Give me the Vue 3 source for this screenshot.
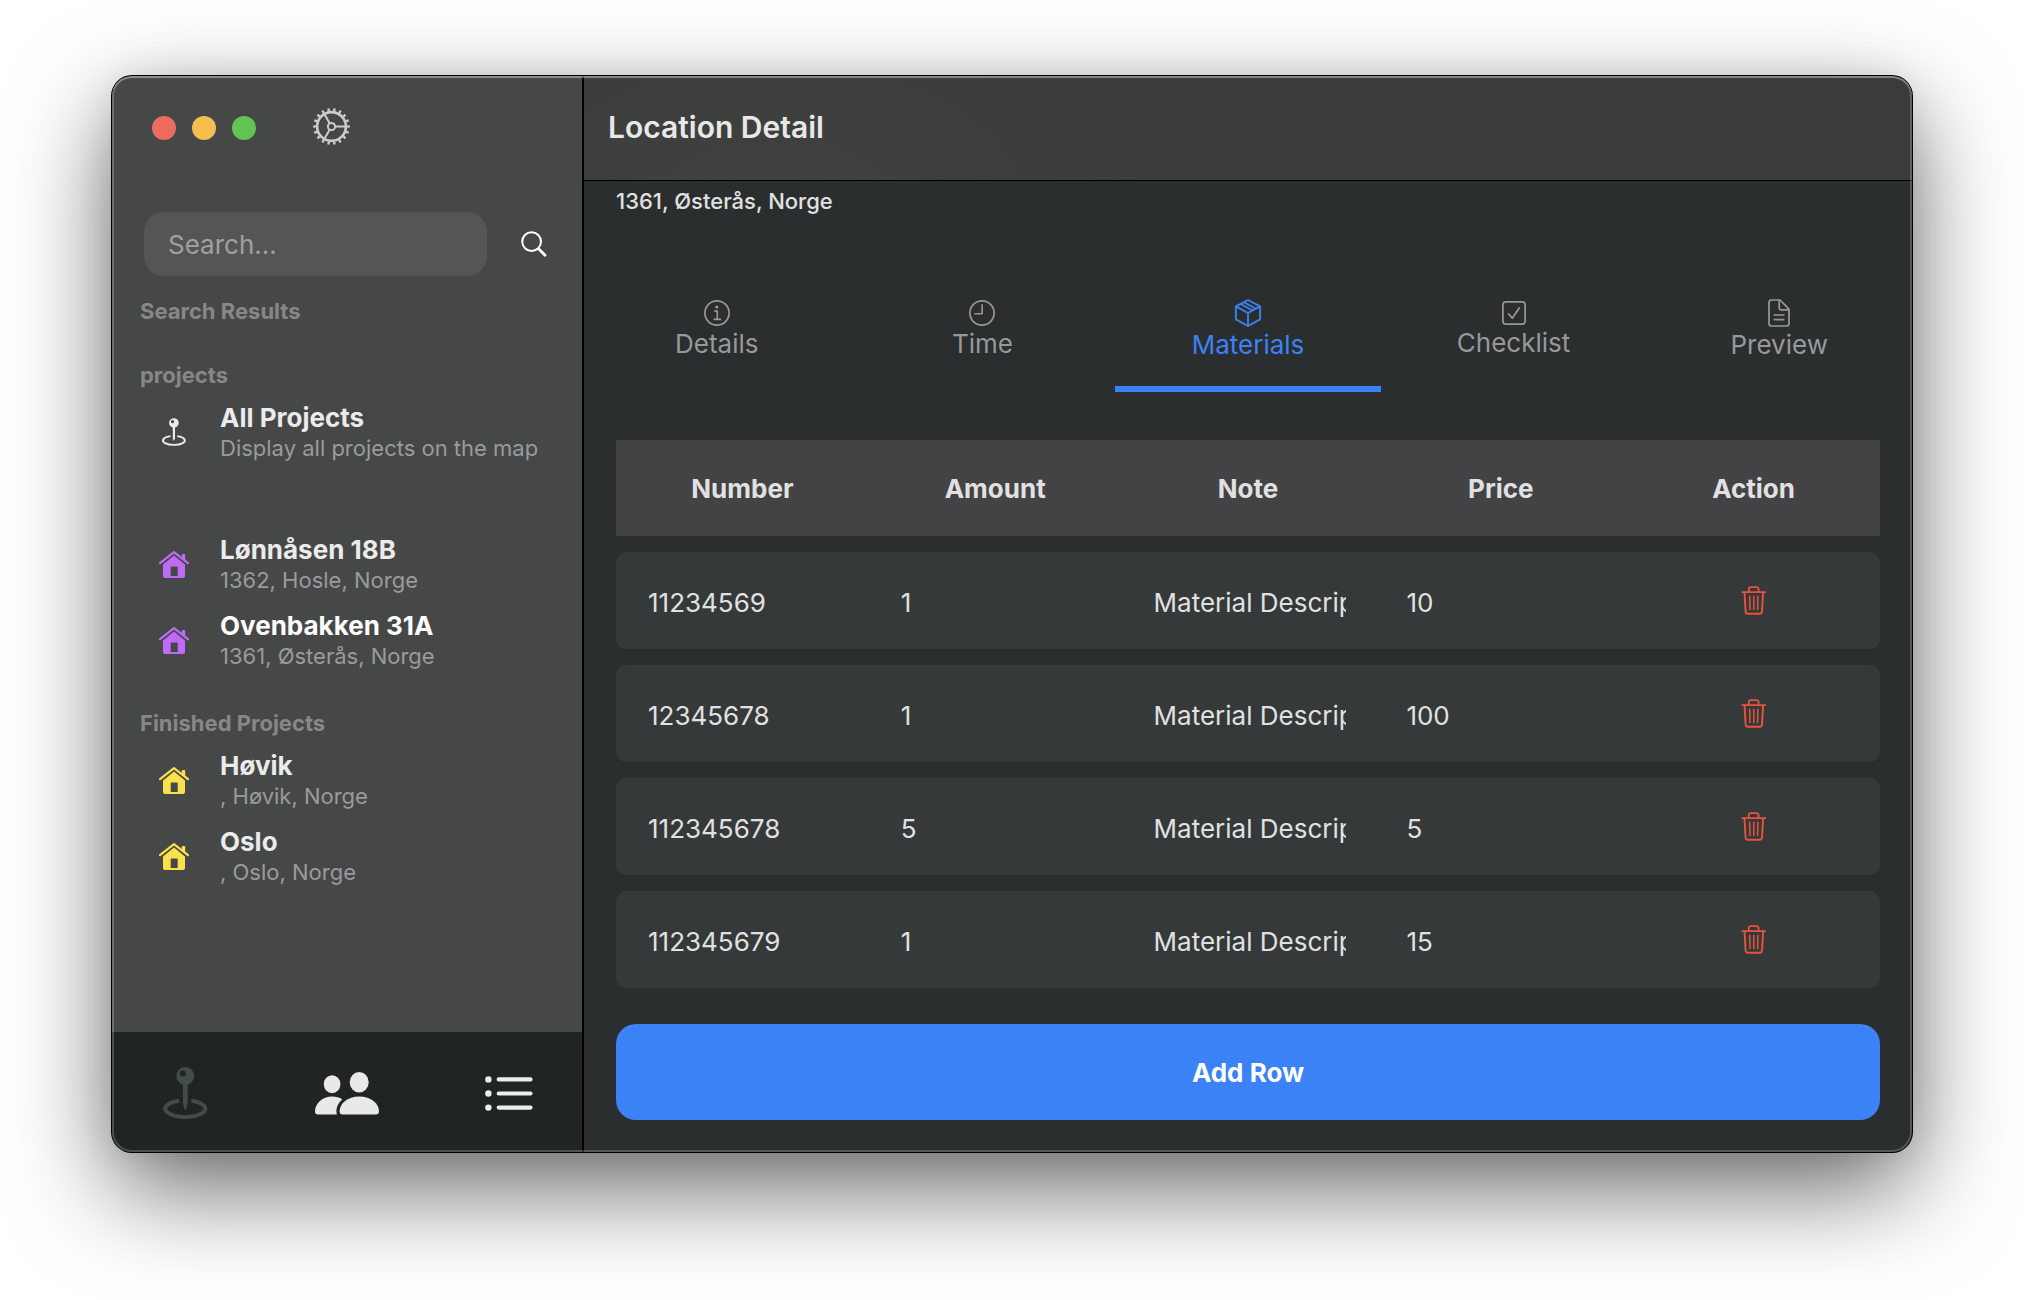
<script setup>
import { ref } from 'vue'

const search = ref('')
const activeTab = ref('Materials')

const projects = [
  { name: 'Lønnåsen 18B', place: '1362, Hosle, Norge' },
  { name: 'Ovenbakken 31A', place: '1361, Østerås, Norge', selected: true },
]
const finished = [
  { name: 'Høvik', place: ', Høvik, Norge' },
  { name: 'Oslo', place: ', Oslo, Norge' },
]
const tabs = ['Details', 'Time', 'Materials', 'Checklist', 'Preview']
const columns = ['Number', 'Amount', 'Note', 'Price', 'Action']
const rows = ref([
  { number: '11234569', amount: '1', note: 'Material Description', price: '10' },
  { number: '12345678', amount: '1', note: 'Material Description', price: '100' },
  { number: '112345678', amount: '5', note: 'Material Description', price: '5' },
  { number: '112345679', amount: '1', note: 'Material Description', price: '15' },
])
const fields = ['number', 'amount', 'note', 'price']

function addRow() {
  rows.value.push({ number: '', amount: '', note: '', price: '' })
}
</script>

<template>
  <div class="desktop">
    <div class="window">
      <aside class="sidebar">
        <div class="titlebar">
          <div class="lights">
            <button class="light red" type="button" aria-label="Close"></button>
            <button class="light yellow" type="button" aria-label="Minimize"></button>
            <button class="light green" type="button" aria-label="Zoom"></button>
          </div>
          <button class="plain settings" type="button" aria-label="Settings">
            <svg width="37" height="37" viewBox="0 0 37 37" fill="none" stroke="#cbcccb">
              <circle cx="18.5" cy="18.5" r="14.4" stroke-width="2.6" />
              <circle cx="18.5" cy="18.5" r="16.8" stroke-width="3" pathLength="36" stroke-dasharray="0.8 1.2" stroke-dashoffset="0.4" />
              <circle cx="18.5" cy="18.5" r="3.6" stroke-width="2" />
              <path d="M22.5 18.5H32M16.5 15L11.5 6.3M16.5 22L11.5 30.7" stroke-width="2" />
            </svg>
          </button>
        </div>

        <form class="search" @submit.prevent>
          <input v-model="search" class="search-box" type="text" placeholder="Search..." aria-label="Search" />
          <button class="plain" type="submit" aria-label="Search">
            <svg width="26" height="26" viewBox="0 0 26 26" fill="none" stroke="#fff" stroke-linecap="round">
              <circle cx="10.6" cy="10.6" r="9.4" stroke-width="2" />
              <path d="M17.6 17.8L24 24.2" stroke-width="2.8" />
            </svg>
          </button>
        </form>

        <nav class="places">
          <h2 class="section">Search Results</h2>
          <h2 class="section">projects</h2>
          <a class="place all" href="#all">
            <span class="place-icon">
              <svg width="24" height="28" viewBox="0 0 45 52" fill="none" stroke="#ececec">
                <path d="M22.3 0a9 9 0 1 0 0 18a9 9 0 1 0 0-18zM19.8 3.6a3 3 0 1 1 0 6a3 3 0 1 1 0-6z" fill="#ececec" fill-rule="evenodd" stroke="none" />
                <path d="M20.2 16h4.2v22l-2.1 5-2.1-5z" fill="#ececec" stroke="none" />
                <path d="M16 33.8A20.5 8.4 0 1 0 28.6 33.8" stroke-width="3.6" />
              </svg>
            </span>
            <span class="place-text">
              <strong>All Projects</strong>
              <small>Display all projects on the map</small>
            </span>
          </a>

          <a v-for="p in projects" :key="p.name" class="place purple" :class="{ selected: p.selected }" href="#project">
            <span class="place-icon">
              <svg width="30" height="27" viewBox="0 0 30 27">
                <path d="M1 12.2L15 1.2L29 12.2" fill="none" stroke="currentColor" stroke-width="2.2" stroke-linecap="round" stroke-linejoin="round" />
                <path d="M22.8 3.8q0-.8.8-.8h1.8q.8 0 .8.8V10.2L22.8 7.4z" fill="currentColor" />
                <path fill-rule="evenodd" d="M15 4.6L26 13.4V25q0 2-2 2H6q-2 0-2-2V13.4zM12.4 15.6q-.7 0-.7.7V24.9h7V16.3q0-.7-.7-.7z" fill="currentColor" />
              </svg>
            </span>
            <span class="place-text">
              <strong>{{ p.name }}</strong>
              <small>{{ p.place }}</small>
            </span>
          </a>

          <h2 class="section">Finished Projects</h2>
          <a v-for="p in finished" :key="p.name" class="place yellow-house" href="#finished">
            <span class="place-icon">
              <svg width="30" height="27" viewBox="0 0 30 27">
                <path d="M1 12.2L15 1.2L29 12.2" fill="none" stroke="currentColor" stroke-width="2.2" stroke-linecap="round" stroke-linejoin="round" />
                <path d="M22.8 3.8q0-.8.8-.8h1.8q.8 0 .8.8V10.2L22.8 7.4z" fill="currentColor" />
                <path fill-rule="evenodd" d="M15 4.6L26 13.4V25q0 2-2 2H6q-2 0-2-2V13.4zM12.4 15.6q-.7 0-.7.7V24.9h7V16.3q0-.7-.7-.7z" fill="currentColor" />
              </svg>
            </span>
            <span class="place-text">
              <strong>{{ p.name }}</strong>
              <small>{{ p.place }}</small>
            </span>
          </a>
        </nav>

        <div class="dock">
          <button class="plain" type="button" aria-label="Map">
            <svg width="45" height="52" viewBox="0 0 45 52" fill="none" stroke="#444b4b">
              <path d="M22.3 0a9 9 0 1 0 0 18a9 9 0 1 0 0-18zM19.8 3.6a3 3 0 1 1 0 6a3 3 0 1 1 0-6z" fill="#444b4b" fill-rule="evenodd" stroke="none" />
              <path d="M19.9 16h4.8v20l-1.7 6.5h-1.4l-1.7-6.5z" fill="#444b4b" stroke="none" />
              <path d="M16.3 33.8A20 8.3 0 1 0 28.3 33.8" stroke-width="4" />
            </svg>
          </button>
          <button class="plain" type="button" aria-label="People">
            <svg width="64" height="43" viewBox="0 0 64 43" fill="#e8eae9">
              <ellipse cx="17.1" cy="12.2" rx="8.3" ry="9" />
              <ellipse cx="44.2" cy="10.3" rx="9.5" ry="10.3" />
              <path d="M3 42.4Q0 42.4 0 39.4C0 31.5 7.5 24.6 17.2 24.6C21 24.6 24.5 25.6 27.3 27.4C23.5 30.6 21.4 34.5 21.4 38.6Q21.4 41 22 42.4z" />
              <path d="M27.8 42.4Q24.6 42.4 24.6 39.2C24.6 32 32.5 24.6 44.3 24.6S64 32 64 39.2Q64 42.4 60.8 42.4z" />
            </svg>
          </button>
          <button class="plain" type="button" aria-label="List">
            <svg width="48" height="35" viewBox="0 0 48 35" fill="#eceeed">
              <circle cx="3.4" cy="3.4" r="3.2" />
              <circle cx="3.4" cy="17.5" r="3.2" />
              <circle cx="3.4" cy="31.6" r="3.2" />
              <path d="M13.7 3.4H45.5M13.7 17.5H45.5M13.7 31.6H45.5" stroke="#eceeed" stroke-width="4.2" stroke-linecap="round" />
            </svg>
          </button>
        </div>
      </aside>

      <main class="main">
        <header class="header"><h1>Location Detail</h1></header>
        <p class="address">1361, Østerås, Norge</p>

        <div class="tabs" role="tablist">
          <button
            v-for="t in tabs"
            :key="t"
            class="tab"
            :class="{ active: t === activeTab }"
            type="button"
            role="tab"
            :aria-selected="t === activeTab"
            @click="activeTab = t"
          >
            <svg v-if="t === 'Details'" width="26" height="26" viewBox="0 0 26 26" fill="none" stroke="currentColor">
              <circle cx="13" cy="13" r="12.1" stroke-width="1.7" />
              <circle cx="12.8" cy="7" r="1.6" fill="currentColor" stroke="none" />
              <path d="M10.3 11.1H13.3V19.3M9.6 19.4H17" stroke-width="1.6" />
            </svg>
            <svg v-else-if="t === 'Time'" width="26" height="26" viewBox="0 0 26 26" fill="none" stroke="currentColor">
              <circle cx="13" cy="13" r="12.1" stroke-width="1.7" />
              <path d="M13.1 4.8V13.7H6" stroke-width="1.6" stroke-linecap="round" stroke-linejoin="round" />
            </svg>
            <svg v-else-if="t === 'Materials'" width="26" height="28" viewBox="0 0 26 28" fill="none" stroke="currentColor" stroke-width="1.8" stroke-linejoin="round">
              <path d="M13 1L25.1 7.4V20.4L13 27L.9 20.4V7.4zM.9 7.4L13 14L25.1 7.4M13 14V27" />
              <path d="M8.8 3.3L20.8 9.8M5.6 5L17.6 11.5" stroke-width="1.6" />
            </svg>
            <svg v-else-if="t === 'Checklist'" width="24" height="24" viewBox="0 0 24 24" fill="none" stroke="currentColor">
              <rect x=".9" y=".9" width="22.2" height="22.2" rx="2.8" stroke-width="1.7" />
              <path d="M6.7 13L10.3 17.2L17.2 7" stroke-width="1.7" stroke-linecap="round" stroke-linejoin="round" />
            </svg>
            <svg v-else width="22" height="28" viewBox="0 0 22 28" fill="none" stroke="currentColor" stroke-width="1.7" stroke-linejoin="round">
              <path d="M12 1H3.6Q1 1 1 3.6V24.4Q1 27 3.6 27H18.4Q21 27 21 24.4V10.2z" />
              <path d="M11.2 1V8.8Q11.2 10.8 13.2 10.8H21M5.6 16H16.4M5.6 20.6H16.4" />
            </svg>
            <span>{{ t }}</span>
          </button>
        </div>

        <div class="materials">
          <table>
            <thead>
              <tr><th v-for="c in columns" :key="c" scope="col">{{ c }}</th></tr>
            </thead>
            <tbody>
              <tr v-for="(r, i) in rows" :key="i">
                <td v-for="f in fields" :key="f">
                  <input v-model="r[f]" type="text" :aria-label="`${f}, row ${i + 1}`" />
                </td>
                <td class="action">
                  <button class="plain" type="button" :aria-label="`Delete row ${i + 1}`" @click="rows.splice(i, 1)">
                    <svg width="26" height="29" viewBox="0 0 26 29" fill="none" stroke="#e9523f" stroke-linecap="round" stroke-linejoin="round">
                      <path d="M1.3 6.2H24.3M7.8 6V3.4Q7.8 1.2 10 1.2H15.4Q17.6 1.2 17.6 3.4V6" stroke-width="1.8" />
                      <path d="M3.5 6.5L4.6 25.6Q4.8 27.8 7 27.8H18.6Q20.8 27.8 21 25.6L22.1 6.5" stroke-width="1.9" />
                      <path d="M8.7 10.2L9 23.6M12.8 10.2V23.6M16.9 10.2L16.6 23.6" stroke-width="1.5" />
                    </svg>
                  </button>
                </td>
              </tr>
            </tbody>
          </table>
          <button class="add" type="button" @click="addRow">Add Row</button>
        </div>
      </main>
    </div>
  </div>
</template>

<style>
body {
  margin: 0;
  background: #fff;
}
</style>

<style scoped>
* {
  box-sizing: border-box;
}
.desktop {
  padding: 76px 112px 148px;
  overflow: hidden;
  font-family: Inter, "Liberation Sans", sans-serif;
  font-size: 26px;
  color: #e1e1e1;
}
.window {
  position: relative;
  display: flex;
  border-radius: 20px;
  overflow: hidden;
  background: #2b2e2f;
  box-shadow: 0 0 0 1px #000, 0 36px 100px rgba(0, 0, 0, 0.6), 0 0 36px rgba(0, 0, 0, 0.08);
}
/* light rim along the inner edge of the window frame */
.window::after {
  content: "";
  position: absolute;
  inset: 0;
  border-radius: inherit;
  pointer-events: none;
  box-shadow: inset 0 0 0 2px rgba(255, 255, 255, 0.2), inset 0 2px 0 rgba(255, 255, 255, 0.22);
}
button,
input {
  font: inherit;
  color: inherit;
}
button {
  border: 0;
  cursor: pointer;
}
.plain {
  display: flex;
  padding: 0;
  background: none;
}
svg {
  display: block;
  flex: none;
}

.sidebar {
  flex: 0 0 472px;
  display: flex;
  flex-direction: column;
  background: #464847;
  border-right: 2px solid #000;
}
.titlebar {
  display: flex;
  align-items: center;
  gap: 57px;
  height: 104px;
  padding-left: 40px;
}
.settings {
  padding-bottom: 4px;
}
.lights {
  display: flex;
  gap: 16px;
}
.light {
  width: 24px;
  height: 24px;
  padding: 0;
  border-radius: 50%;
}
.red {
  background: #ed6a5e;
}
.yellow {
  background: #f5bf4f;
}
.green {
  background: #61c554;
}
.search {
  display: flex;
  align-items: center;
  justify-content: space-between;
  gap: 32px;
  margin: 32px 35px 0 32px;
}
.search-box {
  flex: 0 1 343px;
  min-width: 0;
  height: 64px;
  padding: 0 24px;
  border: 0;
  border-radius: 20px;
  background: #555;
  outline: none;
}
.search-box::placeholder {
  color: #a0a0a0;
  opacity: 1;
}
.places {
  flex: 1;
  padding-top: 20px;
}
.section {
  margin: 0;
  padding: 0 28px;
  height: 64px;
  line-height: 30px;
  font-size: 22px;
  font-weight: 700;
  color: #868786;
}
.section + .place {
  margin-top: -24px;
}
.place {
  display: flex;
  height: 76px;
  padding: 2px 28px 0;
  color: inherit;
  text-decoration: none;
}
.place + .section {
  margin-top: 24px;
}
.all {
  margin-bottom: 56px;
}
.place-icon {
  flex: 0 0 68px;
  display: flex;
  align-items: center;
  justify-content: center;
  height: 60px;
  margin-right: 12px;
}
.place-text {
  display: flex;
  flex-direction: column;
  white-space: nowrap;
}
.place-text strong {
  line-height: 32px;
  font-weight: 700;
  color: #ebebeb;
}
.selected .place-text strong {
  color: #fff;
}
.place-text small {
  font-size: 22px;
  line-height: 28px;
  color: #9a9a9e;
}
.purple .place-icon {
  color: #bf6bf7;
}
.yellow-house .place-icon {
  color: #fae04d;
}
.dock {
  display: flex;
  align-items: center;
  justify-content: space-between;
  height: 120px;
  padding: 2px 49px 0 51px;
  background: #212425;
}

.main {
  flex: 1;
  min-width: 0;
}
.header {
  display: flex;
  align-items: center;
  height: 105px;
  padding: 0 24px 2px;
  border-bottom: 1px solid #000;
  background: radial-gradient(420px 240px at 190px 130px, #404240, #3a3c3b);
}
h1 {
  margin: 0;
  font-size: 30px;
  font-weight: 600;
  color: #e8e8e8;
}
.address {
  margin: 0;
  padding: 0 32px;
  font-size: 22px;
  line-height: 40px;
  font-weight: 500;
}
.tabs {
  display: grid;
  grid-template-columns: repeat(5, 1fr);
  margin-top: 55px;
}
.tab {
  display: flex;
  flex-direction: column;
  align-items: center;
  justify-content: center;
  height: 116px;
  padding: 0;
  background: none;
  border-bottom: 6px solid transparent;
  color: #98989a;
}
.tab span {
  line-height: 36px;
}
.tab.active {
  color: #3b82f7;
  border-bottom-color: #3b82f7;
}
.materials {
  padding: 32px;
}
table {
  width: 100%;
  table-layout: fixed;
  border-collapse: separate;
  border-spacing: 0 16px;
}
th {
  height: 96px;
  padding: 0;
  background: #434345;
  font-weight: 700;
}
td {
  height: 97px;
  padding: 0 28px 0 32px;
  background: #353939;
}
td:first-child {
  border-radius: 10px 0 0 10px;
}
td:last-child {
  border-radius: 0 10px 10px 0;
}
td input {
  display: block;
  width: 100%;
  height: 40px;
  padding: 4px 0 0;
  border: 0;
  background: none;
  outline: none;
}
.action {
  padding: 0;
}
.action .plain {
  margin: 0 auto;
}
.add {
  display: block;
  width: 100%;
  height: 96px;
  margin-top: 20px;
  border-radius: 20px;
  background: #3b82f7;
  font-weight: 700;
  color: #fff;
}
</style>
